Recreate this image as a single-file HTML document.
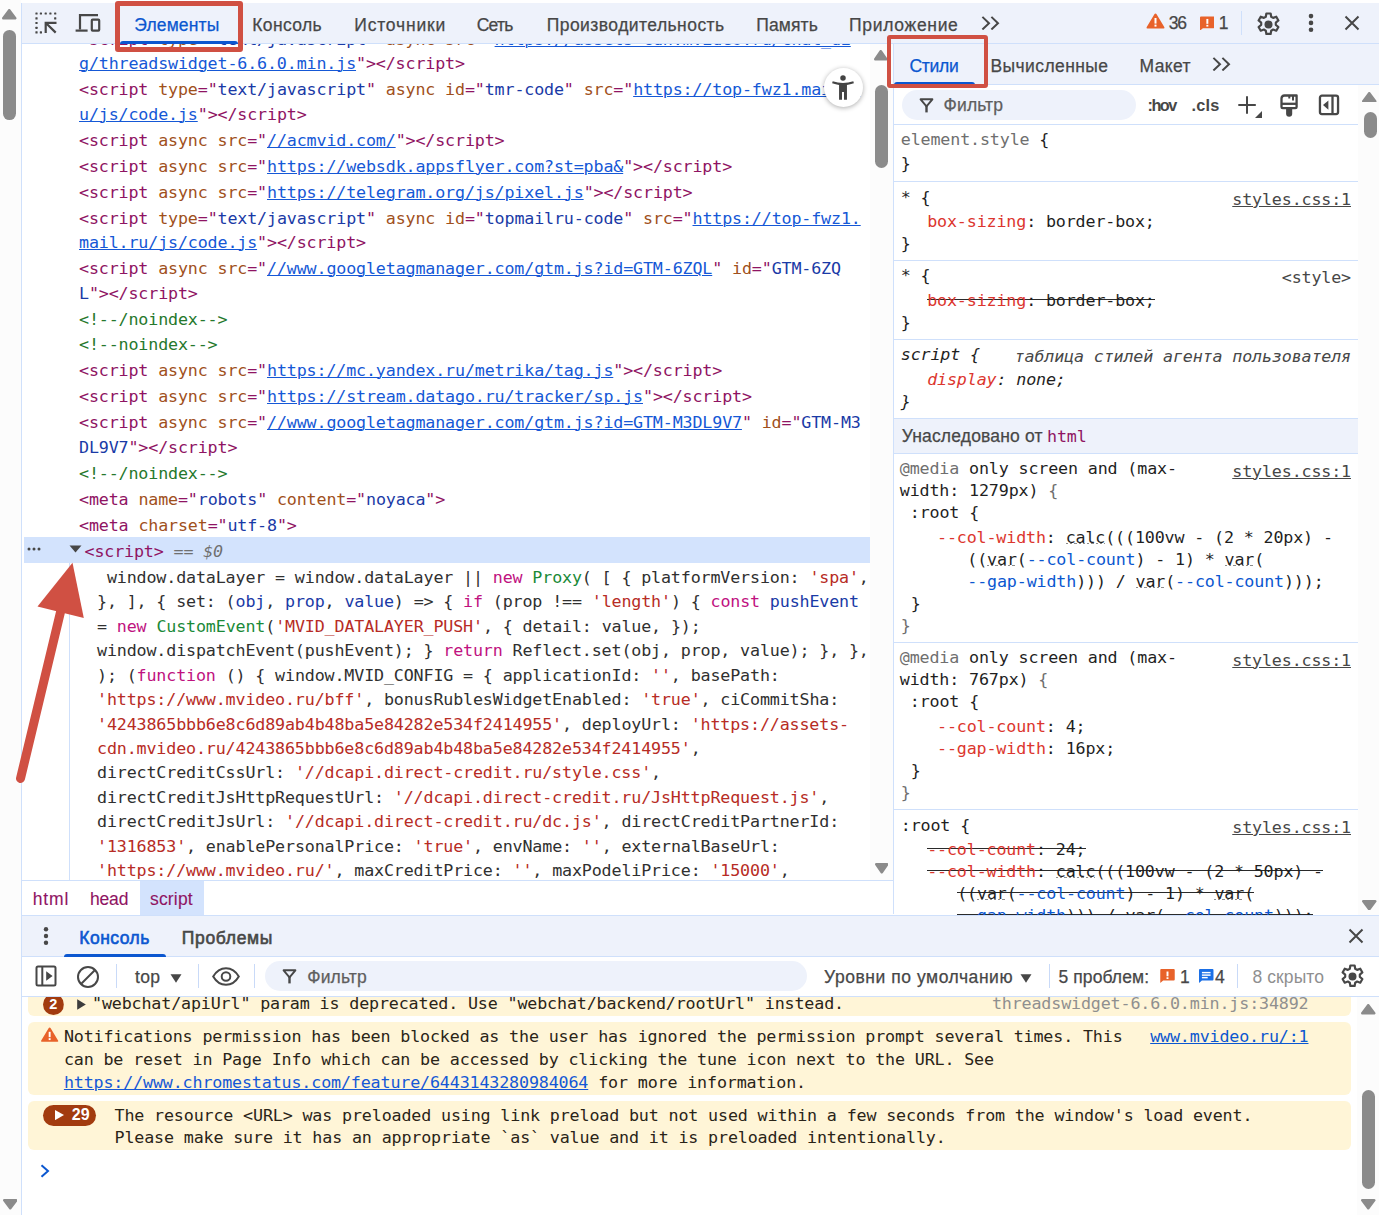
<!DOCTYPE html>
<html lang="ru"><head><meta charset="utf-8"><title>DevTools</title><style>
*{margin:0;padding:0;box-sizing:border-box}
html,body{width:1379px;height:1215px;overflow:hidden;background:#fff}
body{position:relative;font-family:"Liberation Sans",sans-serif;color:#1f1f1f}
.a{position:absolute}
.m{font-family:"DejaVu Sans Mono","Liberation Mono",monospace;font-size:16.7px;white-space:pre;line-height:24px;height:24px;position:absolute;color:#303030;letter-spacing:-0.153px;margin-top:-1px}
.u{font-family:"Liberation Sans",sans-serif;font-size:17px;white-space:pre;position:absolute;line-height:24px;height:24px;color:#474747;-webkit-text-stroke:0.25px}
.t{color:#8f1463}.an{color:#a0501c}.av{color:#1a3aa6}.lk{color:#1558d6;text-decoration:underline;text-underline-offset:1.2px;text-decoration-thickness:1.2px}
.cm{color:#26782c}.kw{color:#c0127f}.st{color:#b72c25}.df{color:#1a3aa6}.ty{color:#1a8a38}
.pn{color:#dc362e}.g{color:#6f6f6f}.bl{color:#0b57d0}
.so{background:linear-gradient(#2a2a2a,#2a2a2a) 0 8.500px/100% 1.200px no-repeat}
.dot{background:repeating-linear-gradient(90deg,#8c8c8c 0 2.200px,transparent 2.200px 4.240px) 0 15.900px/100% 1.400px no-repeat}
.i{font-style:italic}
</style></head><body>
<div class="a" style="left:0;top:0;width:21px;height:1215px;background:#fcfcfc"></div>
<div class="a" style="left:21px;top:3px;width:1px;height:1212px;background:#cfe0fb"></div>
<div class="a" style="left:24px;top:537px;width:846px;height:26px;background:#d3e3fd"></div>
<div class="a" style="left:69px;top:563px;width:1px;height:317px;background:#cfe0fb"></div>
<div class="m" style="left:79px;top:28px"><span class="t">&lt;script </span><span class="an">type</span><span class="t">="</span><span class="av">text/javascript</span><span class="t">" </span><span class="an">async</span><span class="t"> </span><span class="an">src</span><span class="t">="</span><span class="lk">https://assets-cdn.mvideo.ru/chat_di</span></div>
<div class="m" style="left:79px;top:52px"><span class="lk">g/threadswidget-6.6.0.min.js</span><span class="t">"&gt;&lt;/script&gt;</span></div>
<div class="m" style="left:79px;top:78px"><span class="t">&lt;script </span><span class="an">type</span><span class="t">="</span><span class="av">text/javascript</span><span class="t">" </span><span class="an">async</span><span class="t"> </span><span class="an">id</span><span class="t">="</span><span class="av">tmr-code</span><span class="t">" </span><span class="an">src</span><span class="t">="</span><span class="lk">https://top-fwz1.mail.r</span></div>
<div class="m" style="left:79px;top:103px"><span class="lk">u/js/code.js</span><span class="t">"&gt;&lt;/script&gt;</span></div>
<div class="m" style="left:79px;top:129px"><span class="t">&lt;script </span><span class="an">async</span><span class="t"> </span><span class="an">src</span><span class="t">="</span><span class="lk">//acmvid.com/</span><span class="t">"&gt;&lt;/script&gt;</span></div>
<div class="m" style="left:79px;top:155px"><span class="t">&lt;script </span><span class="an">async</span><span class="t"> </span><span class="an">src</span><span class="t">="</span><span class="lk">https://websdk.appsflyer.com?st=pba&amp;</span><span class="t">"&gt;&lt;/script&gt;</span></div>
<div class="m" style="left:79px;top:181px"><span class="t">&lt;script </span><span class="an">async</span><span class="t"> </span><span class="an">src</span><span class="t">="</span><span class="lk">https://telegram.org/js/pixel.js</span><span class="t">"&gt;&lt;/script&gt;</span></div>
<div class="m" style="left:79px;top:207px"><span class="t">&lt;script </span><span class="an">type</span><span class="t">="</span><span class="av">text/javascript</span><span class="t">" </span><span class="an">async</span><span class="t"> </span><span class="an">id</span><span class="t">="</span><span class="av">topmailru-code</span><span class="t">" </span><span class="an">src</span><span class="t">="</span><span class="lk">https://top-fwz1.</span></div>
<div class="m" style="left:79px;top:231px"><span class="lk">mail.ru/js/code.js</span><span class="t">"&gt;&lt;/script&gt;</span></div>
<div class="m" style="left:79px;top:257px"><span class="t">&lt;script </span><span class="an">async</span><span class="t"> </span><span class="an">src</span><span class="t">="</span><span class="lk">//www.googletagmanager.com/gtm.js?id=GTM-6ZQL</span><span class="t">" </span><span class="an">id</span><span class="t">="</span><span class="av">GTM-6ZQ</span></div>
<div class="m" style="left:79px;top:282px"><span class="av">L</span><span class="t">"&gt;&lt;/script&gt;</span></div>
<div class="m" style="left:79px;top:308px"><span class="cm">&lt;!--/noindex--&gt;</span></div>
<div class="m" style="left:79px;top:333px"><span class="cm">&lt;!--noindex--&gt;</span></div>
<div class="m" style="left:79px;top:359px"><span class="t">&lt;script </span><span class="an">async</span><span class="t"> </span><span class="an">src</span><span class="t">="</span><span class="lk">https://mc.yandex.ru/metrika/tag.js</span><span class="t">"&gt;&lt;/script&gt;</span></div>
<div class="m" style="left:79px;top:385px"><span class="t">&lt;script </span><span class="an">async</span><span class="t"> </span><span class="an">src</span><span class="t">="</span><span class="lk">https://stream.datago.ru/tracker/sp.js</span><span class="t">"&gt;&lt;/script&gt;</span></div>
<div class="m" style="left:79px;top:411px"><span class="t">&lt;script </span><span class="an">async</span><span class="t"> </span><span class="an">src</span><span class="t">="</span><span class="lk">//www.googletagmanager.com/gtm.js?id=GTM-M3DL9V7</span><span class="t">" </span><span class="an">id</span><span class="t">="</span><span class="av">GTM-M3</span></div>
<div class="m" style="left:79px;top:436px"><span class="av">DL9V7</span><span class="t">"&gt;&lt;/script&gt;</span></div>
<div class="m" style="left:79px;top:462px"><span class="cm">&lt;!--/noindex--&gt;</span></div>
<div class="m" style="left:79px;top:488px"><span class="t">&lt;meta </span><span class="an">name</span><span class="t">="</span><span class="av">robots</span><span class="t">" </span><span class="an">content</span><span class="t">="</span><span class="av">noyaca</span><span class="t">"&gt;</span></div>
<div class="m" style="left:79px;top:514px"><span class="t">&lt;meta </span><span class="an">charset</span><span class="t">="</span><span class="av">utf-8</span><span class="t">"&gt;</span></div>
<div class="m" style="left:97px;top:566px"> window.dataLayer = window.dataLayer || <span class="kw">new</span> <span class="ty">Proxy</span>( [ { platformVersion: <span class="st">'spa'</span>,</div>
<div class="m" style="left:97px;top:590px">}, ], { set: (<span class="df">obj</span>, <span class="df">prop</span>, <span class="df">value</span>) =&gt; { <span class="kw">if</span> (prop !== <span class="st">'length'</span>) { <span class="kw">const</span> <span class="df">pushEvent</span></div>
<div class="m" style="left:97px;top:615px">= <span class="kw">new</span> <span class="ty">CustomEvent</span>(<span class="st">'MVID_DATALAYER_PUSH'</span>, { detail: value, });</div>
<div class="m" style="left:97px;top:639px">window.dispatchEvent(pushEvent); } <span class="kw">return</span> Reflect.set(obj, prop, value); }, },</div>
<div class="m" style="left:97px;top:664px">); (<span class="kw">function</span> () { window.MVID_CONFIG = { applicationId: <span class="st">''</span>, basePath:</div>
<div class="m" style="left:97px;top:688px"><span class="st">'https://www.mvideo.ru/bff'</span>, bonusRublesWidgetEnabled: <span class="st">'true'</span>, ciCommitSha:</div>
<div class="m" style="left:97px;top:713px"><span class="st">'4243865bbb6e8c6d89ab4b48ba5e84282e534f2414955'</span>, deployUrl: <span class="st">'https://assets-</span></div>
<div class="m" style="left:97px;top:737px"><span class="st">cdn.mvideo.ru/4243865bbb6e8c6d89ab4b48ba5e84282e534f2414955'</span>,</div>
<div class="m" style="left:97px;top:761px">directCreditCssUrl: <span class="st">'//dcapi.direct-credit.ru/style.css'</span>,</div>
<div class="m" style="left:97px;top:786px">directCreditJsHttpRequestUrl: <span class="st">'//dcapi.direct-credit.ru/JsHttpRequest.js'</span>,</div>
<div class="m" style="left:97px;top:810px">directCreditJsUrl: <span class="st">'//dcapi.direct-credit.ru/dc.js'</span>, directCreditPartnerId:</div>
<div class="m" style="left:97px;top:835px"><span class="st">'1316853'</span>, enablePersonalPrice: <span class="st">'true'</span>, envName: <span class="st">''</span>, externalBaseUrl:</div>
<div class="m" style="left:97px;top:859px"><span class="st">'https://www.mvideo.ru/'</span>, maxCreditPrice: <span class="st">''</span>, maxPodeliPrice: <span class="st">'15000'</span>,</div>
<div class="m" style="left:84.5px;top:540px"><span class="t">&lt;script&gt;</span><span class="g i"> == $0</span></div>
<svg class="a" style="left:69px;top:545px" width="13" height="8" viewBox="0 0 13 8"><path d="M0.5 0.5h12l-6 7z" fill="#474747"/></svg>
<svg class="a" style="left:27px;top:547px" width="14" height="4" viewBox="0 0 14 4"><circle cx="2" cy="2" r="1.5" fill="#474747"/><circle cx="7" cy="2" r="1.5" fill="#474747"/><circle cx="12" cy="2" r="1.5" fill="#474747"/></svg>
<div class="a" style="left:870px;top:44px;width:23px;height:836px;background:#fcfcfc"></div>
<div class="a" style="left:875px;top:85px;width:13px;height:83px;border-radius:6.5px;background:#8b8b8b"></div>
<svg class="a" style="left:873.95px;top:50.45px" width="13.5" height="10.5" viewBox="0 0 13.5 10.5"><path d="M6.75 1.3 L12.2 9.2 H1.3Z" fill="#8b8b8b" stroke="#8b8b8b" stroke-width="2.6" stroke-linejoin="round"/></svg>
<svg class="a" style="left:874.75px;top:863.25px" width="13.5" height="10.5" viewBox="0 0 13.5 10.5"><path d="M6.75 9.2 L12.2 1.3 H1.3Z" fill="#8b8b8b" stroke="#8b8b8b" stroke-width="2.6" stroke-linejoin="round"/></svg>
<div class="a" style="left:893px;top:44px;width:1px;height:870px;background:#cfe0fb"></div>
<div class="a" style="left:823.900px;top:67.800px;width:39.300px;height:39.300px;border-radius:20px;background:#fff;box-shadow:0 1px 5px rgba(0,0,0,.33)"></div>
<svg class="a" style="left:831.950px;top:75.400px" width="22" height="25" viewBox="0 0 22 25"><circle cx="11" cy="3.100" r="2.750" fill="#444"/><path d="M0.700 6.300 Q11 9.500 21.300 6.300 L21.900 8.300 Q18 9.600 14.950 9.900 V24.700 H12 V17 H10 V24.700 H7.050 V9.900 Q4 9.600 0.100 8.300Z" fill="#444"/></svg>
<div class="a" style="left:22px;top:0;width:1357px;height:3px;background:#fff"></div>
<div class="a" style="left:22px;top:3px;width:1357px;height:40px;background:#eef2fb"></div>
<div class="a" style="left:22px;top:43px;width:1357px;height:1px;background:#cfe0fb"></div>
<svg class="a" style="left:34px;top:11px" width="24" height="24" viewBox="0 0 24 24"><g fill="#474747"><rect x="1.4" y="1.4" width="2.2" height="2.2" rx="0.5"/><rect x="5.8" y="1.4" width="2.2" height="2.2" rx="0.5"/><rect x="10.6" y="1.4" width="2.2" height="2.2" rx="0.5"/><rect x="15.3" y="1.4" width="2.2" height="2.2" rx="0.5"/><rect x="20.1" y="1.4" width="2.2" height="2.2" rx="0.5"/><rect x="1.4" y="6.2" width="2.2" height="2.2" rx="0.5"/><rect x="1.4" y="10.9" width="2.2" height="2.2" rx="0.5"/><rect x="1.4" y="15.7" width="2.2" height="2.2" rx="0.5"/><rect x="1.4" y="20.2" width="2.2" height="2.2" rx="0.5"/><rect x="20.1" y="6.2" width="2.2" height="2.2" rx="0.5"/><rect x="5.8" y="20.2" width="2.2" height="2.2" rx="0.5"/></g><path d="M22.5 11.800 H11.700 V22 M11.900 12 L21.700 21.600" stroke="#474747" stroke-width="2.200" fill="none"/></svg>
<svg class="a" style="left:75px;top:13px" width="26" height="20" viewBox="0 0 26 20" fill="none" stroke="#474747" stroke-width="2.2"><path d="M5 16.5 V2.1 H23"/><path d="M0.6 17.6 H12.6"/><rect x="16.8" y="6.6" width="7.4" height="11" rx="0.8"/></svg>
<div class="u bl" style="left:134.3px;top:12.5px;font-size:17.5px;letter-spacing:0.14px;">Элементы</div>
<div class="u " style="left:252.3px;top:12.5px;font-size:17.5px;letter-spacing:0.37px;">Консоль</div>
<div class="u " style="left:354.3px;top:12.5px;font-size:17.5px;letter-spacing:0.81px;">Источники</div>
<div class="u " style="left:476.7px;top:12.5px;font-size:17.5px;letter-spacing:-0.75px;">Сеть</div>
<div class="u " style="left:546.7px;top:12.5px;font-size:17.5px;letter-spacing:0.45px;">Производительность</div>
<div class="u " style="left:756.3px;top:12.5px;font-size:17.5px;letter-spacing:0.12px;">Память</div>
<div class="u " style="left:849.0px;top:12.5px;font-size:17.5px;letter-spacing:0.69px;">Приложение</div>
<div class="a" style="left:120px;top:40.700px;width:118px;height:3.300px;border-radius:3px 3px 0 0;background:#0b57d0"></div>
<svg class="a" style="left:980.900px;top:15.900px" width="19" height="14.400" viewBox="0 0 19 14.400" fill="none" stroke="#474747" stroke-width="2"><path d="M1.400 0.900 L8 7.200 L1.400 13.500 M10.400 0.900 L17 7.200 L10.400 13.500"/></svg>
<svg class="a" style="left:1146px;top:13px" width="19" height="16" viewBox="0 0 19 16"><path d="M9.5 0.6 Q10.2 0.6 10.6 1.3 L18.4 14.2 Q18.8 15.4 17.6 15.4 H1.4 Q0.2 15.4 0.6 14.2 L8.4 1.3 Q8.8 0.6 9.5 0.6Z" fill="#e8622a"/><rect x="8.5" y="5" width="2" height="5.6" fill="#fff"/><rect x="8.5" y="11.6" width="2" height="2" fill="#fff"/></svg>
<div class="u " style="left:1168.8px;top:10.8px;font-size:17.5px;letter-spacing:-1.22px;color:#474747">36</div>
<svg class="a" style="left:1199.5px;top:15.6px" width="14.7" height="14.5" viewBox="0 0 15 14"><path d="M1 0 H14 Q15 0 15 1 V11 Q15 12 14 12 H3 L0 14.5 V1 Q0 0 1 0Z" fill="#e8622a"/><rect x="6.5" y="2.6" width="2" height="5" fill="#fff"/><rect x="6.5" y="8.6" width="2" height="1.8" fill="#fff"/></svg>
<div class="u " style="left:1218.7px;top:10.8px;font-size:17.5px;color:#474747">1</div>
<div class="a" style="left:1241px;top:11px;width:1px;height:24px;background:#cfe0fb"></div>
<svg class="a" style="left:1255.3px;top:10.6px" width="27" height="27" viewBox="0 0 24 24" fill="none" stroke="#474747" stroke-width="1.95"><path d="M10.1 2.2h3.8l.5 2.9 1.7 1 2.8-1 1.9 3.3-2.3 1.9v2l2.3 1.9-1.9 3.3-2.8-1-1.7 1-.5 2.9h-3.8l-.5-2.9-1.7-1-2.8 1-1.9-3.3 2.3-1.9v-2L3.200 8.400l1.900-3.300 2.800 1 1.700-1z" stroke-linejoin="round"/><circle cx="12" cy="12" r="2.600" fill="#474747"/></svg>
<svg class="a" style="left:1307px;top:13px" width="8" height="20" viewBox="0 0 8 20"><circle cx="4" cy="3.100" r="2.300" fill="#474747"/><circle cx="4" cy="9.900" r="2.300" fill="#474747"/><circle cx="4" cy="16.700" r="2.300" fill="#474747"/></svg>
<svg class="a" style="left:1344px;top:15px" width="16" height="16" viewBox="0 0 16 16" stroke="#474747" stroke-width="2" fill="none"><path d="M1.5 1.5 L14.5 14.5 M14.5 1.5 L1.5 14.5"/></svg>
<div class="a" style="left:894px;top:44px;width:485px;height:40px;background:#eef2fb"></div>
<div class="a" style="left:894px;top:84px;width:485px;height:1px;background:#cfe0fb"></div>
<div class="u bl" style="left:909.5px;top:53.5px;font-size:17.5px;letter-spacing:-0.28px;">Стили</div>
<div class="u " style="left:990.4px;top:53.5px;font-size:17.5px;letter-spacing:0.42px;">Вычисленные</div>
<div class="u " style="left:1139.5px;top:53.5px;font-size:17.5px;letter-spacing:0.37px;">Макет</div>
<div class="a" style="left:894px;top:81.500px;width:81px;height:3px;border-radius:3px 3px 0 0;background:#0b57d0"></div>
<svg class="a" style="left:1211.900px;top:56.800px" width="19" height="14.400" viewBox="0 0 19 14.400" fill="none" stroke="#474747" stroke-width="2"><path d="M1.400 0.900 L8 7.200 L1.400 13.500 M10.400 0.900 L17 7.200 L10.400 13.500"/></svg>
<div class="a" style="left:1358px;top:85px;width:21px;height:830px;background:#fcfcfc"></div>
<div class="a" style="left:1363.500px;top:112px;width:13px;height:26px;border-radius:6.5px;background:#8b8b8b"></div>
<svg class="a" style="left:1362.25px;top:91.55px" width="14.5" height="10.5" viewBox="0 0 14.5 10.5"><path d="M7.25 1.3 L13.2 9.2 H1.3Z" fill="#8b8b8b" stroke="#8b8b8b" stroke-width="2.6" stroke-linejoin="round"/></svg>
<svg class="a" style="left:1362.25px;top:899.75px" width="14.5" height="10.5" viewBox="0 0 14.5 10.5"><path d="M7.25 9.2 L13.2 1.3 H1.3Z" fill="#8b8b8b" stroke="#8b8b8b" stroke-width="2.6" stroke-linejoin="round"/></svg>
<div class="a" style="left:902px;top:90px;width:234px;height:29.500px;border-radius:15px;background:#eef2fb"></div>
<svg class="a" style="left:918.5px;top:97.6px" width="15" height="15" viewBox="0 0 15 15" fill="none" stroke="#474747" stroke-linejoin="round"><path d="M1.6 1.300 H13.400 L7.500 8.300Z" stroke-width="1.900"/><path d="M7.500 8 V14.400" stroke-width="2.400"/></svg>
<div class="u " style="left:943.6px;top:92.5px;font-size:17.5px;letter-spacing:0.12px;color:#5e5e5e">Фильтр</div>
<div class="u " style="left:1147.5px;top:92.7px;font-size:16.3px;letter-spacing:-1.53px;font-weight:bold;color:#474747;-webkit-text-stroke:0">:hov</div>
<div class="u " style="left:1191.4px;top:92.7px;font-size:16.3px;letter-spacing:0.26px;font-weight:bold;color:#474747;-webkit-text-stroke:0">.cls</div>
<svg class="a" style="left:1237px;top:95px" width="27" height="24" viewBox="0 0 27 24"><path d="M10 1.300 V18.800 M1.300 10 H18.800" stroke="#474747" stroke-width="2" fill="none"/><path d="M25 16 V23 H18Z" fill="#474747"/></svg>
<svg class="a" style="left:1280px;top:94px" width="18" height="23" viewBox="0 0 18 23" fill="none" stroke="#474747" stroke-width="2.300"><path d="M1.500 12.900 V4.500 Q1.500 1.500 4.500 1.500 H16.600 V12.900 Q16.600 14.100 15.400 14.100 H2.700 Q1.500 14.100 1.500 12.900Z" stroke-linejoin="round"/><path d="M1.500 9.800 H16.600"/><path d="M9.300 1.500 V4.600 M13 1.500 V6.400" stroke-width="2"/><path d="M6.100 14.500 H12.200 V19.700 Q12.200 22.700 9.150 22.700 Q6.100 22.700 6.100 19.700Z" fill="#474747" stroke="none"/></svg>
<svg class="a" style="left:1318px;top:94px" width="22" height="22" viewBox="0 0 22 22" fill="none" stroke="#474747" stroke-width="2.300"><rect x="1.950" y="1.650" width="18.100" height="18.400" rx="2"/><path d="M14.500 1.650 V20"/><path d="M10.400 6.400 V15.800 L5 11.100Z" fill="#474747" stroke="none"/></svg>
<div class="a" style="left:894px;top:124px;width:464px;height:1px;background:#cfe0fb"></div>
<div class="m " style="left:900.8px;top:128px;color:#1f1f1f;"><span class="g">element.style</span> {</div>
<div class="m " style="left:900.8px;top:152px;color:#1f1f1f;">}</div>
<div class="a" style="left:894px;top:181px;width:464px;height:1px;background:#cfe0fb"></div>
<div class="a" style="left:894px;top:259.5px;width:464px;height:1px;background:#cfe0fb"></div>
<div class="a" style="left:894px;top:339px;width:464px;height:1px;background:#cfe0fb"></div>
<div class="a" style="left:894px;top:417.5px;width:464px;height:1px;background:#cfe0fb"></div>
<div class="a" style="left:894px;top:452.5px;width:464px;height:1px;background:#cfe0fb"></div>
<div class="a" style="left:894px;top:642px;width:464px;height:1px;background:#cfe0fb"></div>
<div class="a" style="left:894px;top:809.2px;width:464px;height:1px;background:#cfe0fb"></div>
<div class="m " style="left:900.8px;top:186px;color:#1f1f1f;">* {</div>
<div class="m" style="right:28px;top:188px;color:#474747;text-decoration:underline;text-underline-offset:1.2px;">styles.css:1</div>
<div class="m " style="left:927.2px;top:210px;color:#1f1f1f;"><span class="pn">box-sizing</span>: border-box;</div>
<div class="m " style="left:900.8px;top:232px;color:#1f1f1f;">}</div>
<div class="m " style="left:900.8px;top:264px;color:#1f1f1f;">* {</div>
<div class="m" style="right:28px;top:266px;color:#474747;">&lt;style&gt;</div>
<div class="m " style="left:927.2px;top:289px;color:#1f1f1f;"><span class="so"><span class="pn">box-sizing</span>: border-box;</span></div>
<div class="m " style="left:900.8px;top:311px;color:#1f1f1f;">}</div>
<div class="m i" style="left:900.8px;top:343px;color:#1f1f1f;">script {</div>
<div class="m i" style="right:28px;top:345px;color:#474747">таблица стилей агента пользователя</div>
<div class="m i" style="left:927.2px;top:368px;color:#1f1f1f;"><span class="pn">display</span>: none;</div>
<div class="m i" style="left:900.8px;top:390px;color:#1f1f1f;">}</div>
<div class="a" style="left:894px;top:418.500px;width:464px;height:34px;background:#eef2fb"></div>
<div class="u " style="left:901.7px;top:423.5px;font-size:17.5px;letter-spacing:0.17px;color:#474747">Унаследовано от</div>
<div class="m" style="left:1047px;top:425px;color:#8f1463">html</div>
<div class="m " style="left:899.8px;top:457px;color:#1f1f1f;"><span class="g">@media</span> only screen and (max-</div>
<div class="m" style="right:28px;top:459.5px;color:#474747;text-decoration:underline;text-underline-offset:1.2px;">styles.css:1</div>
<div class="m " style="left:899.8px;top:479px;color:#1f1f1f;">width: 1279px) <span class="g">{</span></div>
<div class="m " style="left:909.8px;top:501px;color:#1f1f1f;">:root {</div>
<div class="m " style="left:937px;top:526px;color:#1f1f1f;"><span class="pn">--col-width</span>: <span class="dot">calc</span>(((100vw - (2 * 20px) -</div>
<div class="m " style="left:967.3px;top:548px;color:#1f1f1f;">((<span class="dot">var</span>(<span class="bl">--col-count</span>) - 1) * <span class="dot">var</span>(</div>
<div class="m " style="left:967.3px;top:570px;color:#1f1f1f;"><span class="bl">--gap-width</span>))) / <span class="dot">var</span>(<span class="bl">--col-count</span>)));</div>
<div class="m " style="left:910.8px;top:592px;color:#1f1f1f;">}</div>
<div class="m " style="left:900.8px;top:614px;color:#1f1f1f;"><span class="g">}</span></div>
<div class="m " style="left:899.8px;top:646px;color:#1f1f1f;"><span class="g">@media</span> only screen and (max-</div>
<div class="m" style="right:28px;top:648.5px;color:#474747;text-decoration:underline;text-underline-offset:1.2px;">styles.css:1</div>
<div class="m " style="left:899.8px;top:668px;color:#1f1f1f;">width: 767px) <span class="g">{</span></div>
<div class="m " style="left:909.8px;top:690px;color:#1f1f1f;">:root {</div>
<div class="m " style="left:937px;top:715px;color:#1f1f1f;"><span class="pn">--col-count</span>: 4;</div>
<div class="m " style="left:937px;top:737px;color:#1f1f1f;"><span class="pn">--gap-width</span>: 16px;</div>
<div class="m " style="left:910.8px;top:759px;color:#1f1f1f;">}</div>
<div class="m " style="left:900.8px;top:781px;color:#1f1f1f;"><span class="g">}</span></div>
<div class="m " style="left:900.8px;top:814px;color:#1f1f1f;">:root {</div>
<div class="m" style="right:28px;top:816px;color:#474747;text-decoration:underline;text-underline-offset:1.2px;">styles.css:1</div>
<div class="m " style="left:927.2px;top:838px;color:#1f1f1f;"><span class="so"><span class="pn">--col-count</span>: 24;</span></div>
<div class="m " style="left:927.2px;top:860px;color:#1f1f1f;"><span class="so"><span class="pn">--col-width</span>: <span class="dot">calc</span>(((100vw - (2 * 50px) -</span></div>
<div class="m " style="left:957.2px;top:882px;color:#1f1f1f;"><span class="so">((<span class="dot">var</span>(<span class="bl">--col-count</span>) - 1) * <span class="dot">var</span>(</span></div>
<div class="m " style="left:957.2px;top:904px;color:#1f1f1f;"><span class="so"><span class="bl">--gap-width</span>))) / <span class="dot">var</span>(<span class="bl">--col-count</span>)));</span></div>
<div class="a" style="left:22px;top:880px;width:871px;height:35px;background:#fff"></div>
<div class="a" style="left:22px;top:880px;width:871px;height:1px;background:#cfe0fb"></div>
<div class="a" style="left:140px;top:881px;width:63.500px;height:34px;background:#d3e3fd"></div>
<div class="u " style="left:32.7px;top:887px;font-size:17.5px;letter-spacing:0.84px;color:#8f1463;-webkit-text-stroke:0.100px">html</div>
<div class="u " style="left:90.0px;top:887px;font-size:17.5px;letter-spacing:-0.18px;color:#8f1463;-webkit-text-stroke:0.100px">head</div>
<div class="u " style="left:150.0px;top:887px;font-size:17.5px;letter-spacing:0.17px;color:#8f1463;-webkit-text-stroke:0.100px">script</div>
<div class="a" style="left:22px;top:914.700px;width:1357px;height:301px;background:#fff"></div>
<div class="a" style="left:22px;top:914.700px;width:1357px;height:1px;background:#cfe0fb"></div>
<div class="a" style="left:22px;top:915.700px;width:1357px;height:40.800px;background:#eef2fb"></div>
<div class="a" style="left:22px;top:956.300px;width:1357px;height:1px;background:#cfe0fb"></div>
<svg class="a" style="left:42px;top:926px" width="8" height="20" viewBox="0 0 8 20"><circle cx="4" cy="3.300" r="2.200" fill="#474747"/><circle cx="4" cy="10" r="2.200" fill="#474747"/><circle cx="4" cy="16.700" r="2.200" fill="#474747"/></svg>
<div class="u bl" style="left:79.3px;top:926px;font-size:17.5px;letter-spacing:0.47px;-webkit-text-stroke:0.6px;">Консоль</div>
<div class="u " style="left:181.7px;top:926px;font-size:17.5px;letter-spacing:0.69px;-webkit-text-stroke:0.6px;">Проблемы</div>
<div class="a" style="left:64px;top:953.500px;width:102px;height:3.300px;border-radius:3px 3px 0 0;background:#0b57d0"></div>
<svg class="a" style="left:1348.100px;top:928px" width="16" height="16" viewBox="0 0 16 16" stroke="#474747" stroke-width="2" fill="none"><path d="M1.500 1.500 L14.500 14.500 M14.500 1.500 L1.500 14.500"/></svg>
<div class="a" style="left:22px;top:996px;width:1357px;height:1px;background:#cfe0fb"></div>
<svg class="a" style="left:35px;top:965px" width="22" height="22" viewBox="0 0 22 22" fill="none" stroke="#474747" stroke-width="2"><rect x="1.500" y="1.500" width="19" height="19" rx="1.500"/><path d="M7.300 1.500 V20.500"/><path d="M11.200 6.200 V15.800 L17.600 11Z" fill="#474747" stroke="none"/></svg>
<svg class="a" style="left:76px;top:964.500px" width="24" height="24" viewBox="0 0 24 24" fill="none" stroke="#474747" stroke-width="2"><circle cx="12" cy="12" r="10"/><path d="M5 19 L19 5"/></svg>
<div class="a" style="left:115.75px;top:964px;width:1.500px;height:24px;background:#c9daf8"></div>
<div class="a" style="left:197.75px;top:964px;width:1.500px;height:24px;background:#c9daf8"></div>
<div class="a" style="left:253.75px;top:964px;width:1.500px;height:24px;background:#c9daf8"></div>
<div class="a" style="left:1048.75px;top:964px;width:1.500px;height:24px;background:#c9daf8"></div>
<div class="a" style="left:1236.75px;top:964px;width:1.500px;height:24px;background:#c9daf8"></div>
<div class="u " style="left:135.0px;top:964.5px;font-size:17.5px;letter-spacing:0.34px;color:#474747">top</div>
<svg class="a" style="left:170px;top:973.700px" width="12" height="9" viewBox="0 0 12 9"><path d="M0.500 0.300 H11.500 L6 8.800Z" fill="#474747"/></svg>
<svg class="a" style="left:212px;top:967px" width="28" height="19" viewBox="0 0 28 19" fill="none" stroke="#474747" stroke-width="2"><path d="M1.200 9.500 Q6 1.200 14 1.200 Q22 1.200 26.800 9.500 Q22 17.800 14 17.800 Q6 17.800 1.200 9.500Z"/><circle cx="14" cy="9.500" r="4.300"/></svg>
<div class="a" style="left:265px;top:961px;width:541.500px;height:30px;border-radius:15px;background:#eef2fb"></div>
<svg class="a" style="left:281.6px;top:968.5px" width="15" height="15" viewBox="0 0 15 15" fill="none" stroke="#474747" stroke-linejoin="round"><path d="M1.6 1.300 H13.400 L7.500 8.300Z" stroke-width="1.900"/><path d="M7.500 8 V14.400" stroke-width="2.400"/></svg>
<div class="u " style="left:307.3px;top:964.5px;font-size:17.5px;letter-spacing:0.12px;color:#5e5e5e">Фильтр</div>
<div class="u " style="left:824.0px;top:964.5px;font-size:17.5px;letter-spacing:0.55px;color:#474747">Уровни по умолчанию</div>
<svg class="a" style="left:1020px;top:973.700px" width="12" height="9" viewBox="0 0 12 9"><path d="M0.500 0.300 H11.500 L6 8.800Z" fill="#474747"/></svg>
<div class="u " style="left:1058.5px;top:964.5px;font-size:17.5px;letter-spacing:0.10px;color:#474747">5 проблем:</div>
<svg class="a" style="left:1160px;top:969px" width="15" height="13.5" viewBox="0 0 15 14"><path d="M1 0 H14 Q15 0 15 1 V11 Q15 12 14 12 H3 L0 14.5 V1 Q0 0 1 0Z" fill="#e8622a"/><rect x="6.5" y="2.6" width="2" height="5" fill="#fff"/><rect x="6.5" y="8.6" width="2" height="1.8" fill="#fff"/></svg>
<div class="u " style="left:1180.0px;top:964.5px;font-size:17.5px;color:#474747">1</div>
<svg class="a" style="left:1199px;top:969px" width="14.5" height="13.5" viewBox="0 0 15 14"><path d="M1 0 H14 Q15 0 15 1 V11 Q15 12 14 12 H3 L0 14.5 V1 Q0 0 1 0Z" fill="#1a6fe6"/><rect x="3" y="3" width="9" height="1.5" fill="#fff"/><rect x="3" y="5.6" width="9" height="1.5" fill="#fff"/><rect x="3" y="8.2" width="6" height="1.5" fill="#fff"/></svg>
<div class="u " style="left:1215.0px;top:964.5px;font-size:17.5px;color:#474747">4</div>
<div class="u " style="left:1252.5px;top:964.5px;font-size:17.5px;letter-spacing:0.09px;color:#8f8f8f;-webkit-text-stroke:0">8 скрыто</div>
<svg class="a" style="left:1338.8px;top:963.3px" width="27" height="27" viewBox="0 0 24 24" fill="none" stroke="#474747" stroke-width="1.95"><path d="M10.1 2.2h3.8l.5 2.9 1.7 1 2.8-1 1.9 3.3-2.3 1.9v2l2.3 1.9-1.9 3.3-2.8-1-1.7 1-.5 2.9h-3.8l-.5-2.9-1.7-1-2.8 1-1.9-3.3 2.3-1.9v-2L3.200 8.400l1.900-3.300 2.800 1 1.700-1z" stroke-linejoin="round"/><circle cx="12" cy="12" r="2.600" fill="#474747"/></svg>
<div class="a" style="left:1357px;top:997px;width:22px;height:218px;background:#fcfcfc"></div>
<div class="a" style="left:1362px;top:1090px;width:13px;height:99px;border-radius:6.500px;background:#8b8b8b"></div>
<svg class="a" style="left:1361.25px;top:1004.05px" width="14.5" height="10.5" viewBox="0 0 14.5 10.5"><path d="M7.25 1.3 L13.2 9.2 H1.3Z" fill="#8b8b8b" stroke="#8b8b8b" stroke-width="2.6" stroke-linejoin="round"/></svg>
<svg class="a" style="left:1361.25px;top:1199.25px" width="14.5" height="10.5" viewBox="0 0 14.5 10.5"><path d="M7.25 9.2 L13.2 1.3 H1.3Z" fill="#8b8b8b" stroke="#8b8b8b" stroke-width="2.6" stroke-linejoin="round"/></svg>
<div class="a" style="left:28px;top:997px;width:1323px;height:19px;border-radius:0 0 6px 6px;background:#fff5d7"></div>
<div class="a" style="left:28px;top:1022px;width:1323px;height:73px;border-radius:6px;background:#fff5d7"></div>
<div class="a" style="left:28px;top:1101px;width:1323px;height:48.500px;border-radius:6px;background:#fff5d7"></div>
<div class="a" style="left:43px;top:994.400px;width:20.800px;height:20.800px;border-radius:11px;clip-path:inset(2.600px 0 0 0);background:#a23b0f;color:#fff;font:bold 14.500px/20.800px 'Liberation Sans',sans-serif;text-align:center">2</div>
<svg class="a" style="left:77px;top:998.500px" width="9" height="11" viewBox="0 0 9 11"><path d="M0.200 0.200 V10.800 L8.800 5.500Z" fill="#3c3c3c"/></svg>
<div class="m" style="left:92px;top:991.5px;color:#2a2418;">"webchat/apiUrl" param is deprecated. Use "webchat/backend/rootUrl" instead.</div>
<div class="m" style="right:70.5px;top:991.5px;color:#8f8f8f;">threadswidget-6.6.0.min.js:34892</div>
<svg class="a" style="left:39.7px;top:1027.1px" width="19.3" height="15.4" viewBox="0 0 19 16"><path d="M9.5 0.6 Q10.2 0.6 10.6 1.3 L18.4 14.2 Q18.8 15.4 17.6 15.4 H1.4 Q0.2 15.4 0.6 14.2 L8.4 1.3 Q8.8 0.6 9.5 0.6Z" fill="#e8622a"/><rect x="8.5" y="5" width="2" height="5.6" fill="#fff"/><rect x="8.5" y="11.6" width="2" height="2" fill="#fff"/></svg>
<div class="m" style="left:63.9px;top:1024.5px;color:#2a2418;">Notifications permission has been blocked as the user has ignored the permission prompt several times. This</div>
<div class="m" style="right:70.5px;top:1024.5px;color:#0b57d0;text-decoration:underline;text-underline-offset:1.2px;">www.mvideo.ru/:1</div>
<div class="m" style="left:63.9px;top:1047.5px;color:#2a2418;">can be reset in Page Info which can be accessed by clicking the tune icon next to the URL. See</div>
<div class="m" style="left:63.9px;top:1070.5px;color:#2a2418;"><span class="lk">https://www.chromestatus.com/feature/6443143280984064</span> for more information.</div>
<div class="a" style="left:42.600px;top:1105px;width:53.500px;height:20.700px;border-radius:10.500px;background:#a23b0f"></div>
<svg class="a" style="left:54.800px;top:1110.300px" width="9" height="10.200" viewBox="0 0 9 10.200"><path d="M0 0 V10.200 L9 5.100Z" fill="#fff"/></svg>
<div class="a" style="left:71.700px;top:1105px;height:20.700px;color:#fff;font:bold 16px/20.200px 'Liberation Sans',sans-serif;letter-spacing:0.200px">29</div>
<div class="m" style="left:114.5px;top:1104px;color:#2a2418;">The resource &lt;URL&gt; was preloaded using link preload but not used within a few seconds from the window's load event.</div>
<div class="m" style="left:114.5px;top:1126px;color:#2a2418;">Please make sure it has an appropriate `as` value and it is preloaded intentionally.</div>
<svg class="a" style="left:40px;top:1164px" width="10" height="14" viewBox="0 0 10 14" fill="none" stroke="#0b57d0" stroke-width="2"><path d="M1.500 1.200 L8 7 L1.500 12.800"/></svg>
<div class="a" style="left:3.300px;top:30px;width:12.700px;height:90px;border-radius:6.400px;background:#8b8b8b"></div>
<svg class="a" style="left:2.25px;top:9.25px" width="14.5" height="10.5" viewBox="0 0 14.5 10.5"><path d="M7.25 1.3 L13.2 9.2 H1.3Z" fill="#8b8b8b" stroke="#8b8b8b" stroke-width="2.6" stroke-linejoin="round"/></svg>
<svg class="a" style="left:2.75px;top:1199.25px" width="14.5" height="10.5" viewBox="0 0 14.5 10.5"><path d="M7.25 9.2 L13.2 1.3 H1.3Z" fill="#8b8b8b" stroke="#8b8b8b" stroke-width="2.6" stroke-linejoin="round"/></svg>
<div class="a" style="left:115px;top:1px;width:127.500px;height:50.750px;border:5px solid #d05043;border-radius:3px"></div>
<div class="a" style="left:886.800px;top:35px;width:101.300px;height:53.200px;border:4.900px solid #d05043;border-radius:3px"></div>
<svg class="a" style="left:0;top:540px" width="140" height="260" viewBox="0 540 140 260"><path d="M20.500 778.500 L61 610" stroke="#d05043" stroke-width="9" stroke-linecap="round" fill="none"/><path d="M72.500 562.800 L37.500 606.600 L83.800 618Z" fill="#d05043"/></svg>

</body></html>
